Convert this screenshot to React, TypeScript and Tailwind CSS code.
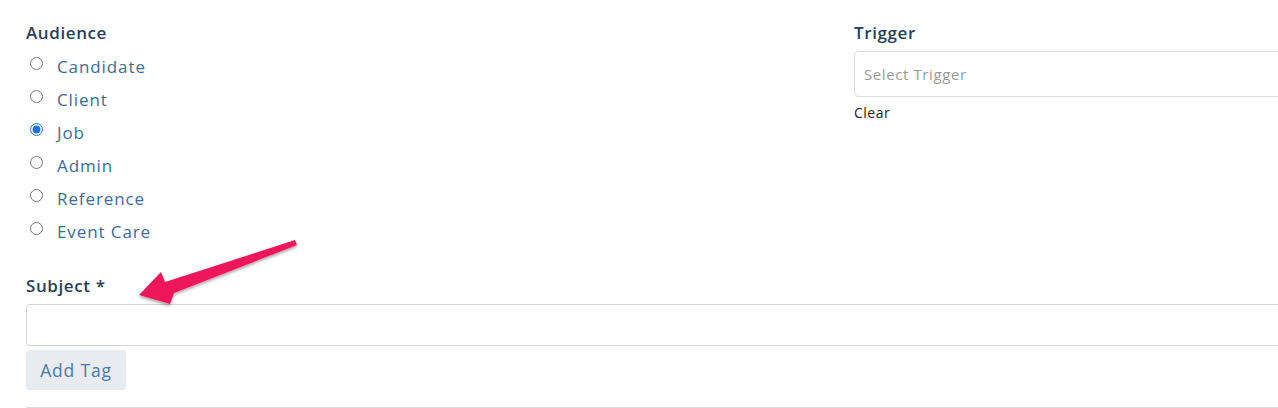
import React from "react";

const audiences = ["Candidate", "Client", "Job", "Admin", "Reference", "Event Care"];

const Arrow: React.FC = () => (
  <svg
    className="absolute left-[130px] top-[232px] pointer-events-none"
    width="180"
    height="80"
    viewBox="0 0 180 80"
  >
    <defs>
      <filter id="sh" x="-20%" y="-20%" width="140%" height="160%">
        <feDropShadow dx="0" dy="2" stdDeviation="1.5" floodColor="#000" floodOpacity="0.35" />
      </filter>
    </defs>
    <path
      d="M9 63 L31 40 L35 50 L165 8 L167 13 L44 61 L40 72 Z"
      fill="#f0195b"
      strokeLinejoin="round"
      filter="url(#sh)"
    />
  </svg>
);

const heading = "text-[17px] font-semibold text-[#283f5c] leading-[22px] tracking-[0.6px]";

const App: React.FC = () => {
  return (
    <div className="relative w-full h-[408px] overflow-hidden bg-white font-['Open_Sans',sans-serif]">
      <div className="w-[1300px] pl-[26px] pt-[22px]">
        <div className="flex">
          <div className="w-[828px]">
            <div className={heading}>Audience</div>
            <div className="flex flex-col mt-[6px]">
              {audiences.map((a) => (
                <label key={a} className="flex items-center h-[33px]">
                  <input
                    type="radio"
                    name="aud"
                    defaultChecked={a === "Job"}
                    className="w-[13px] h-[13px] ml-[4px] mr-[14px] -mt-[6px] accent-[#1a73e8]"
                  />
                  <span className="text-[17px] text-[#406c99] tracking-[0.9px]">{a}</span>
                </label>
              ))}
            </div>
          </div>
          <div className="flex-1">
            <div className={heading}>Trigger</div>
            <div className="mt-[7px] h-[46px] border border-[#dedede] rounded-[4px] flex items-center pl-[9px] text-[15px] tracking-[0.6px] text-[#9a9a9a]">
              Select Trigger
            </div>
            <div className="mt-[5px] text-[14px] tracking-[0.5px] text-[#222]">Clear</div>
          </div>
        </div>
        <div className={`mt-[27px] ${heading}`}>Subject *</div>
        <div className="mt-[7px] h-[42px] border border-[#d4d4d4] rounded-[4px]" />
        <button className="mt-[4px] w-[100px] h-[40px] bg-[#e8ecf0] rounded-[4px] text-[17.5px] tracking-[0.8px] text-[#4a79ab]">
          Add Tag
        </button>
        <div className="mt-[17px] border-t border-[#dcdcdc]" />
      </div>
      <Arrow />
    </div>
  );
};

export default App;
